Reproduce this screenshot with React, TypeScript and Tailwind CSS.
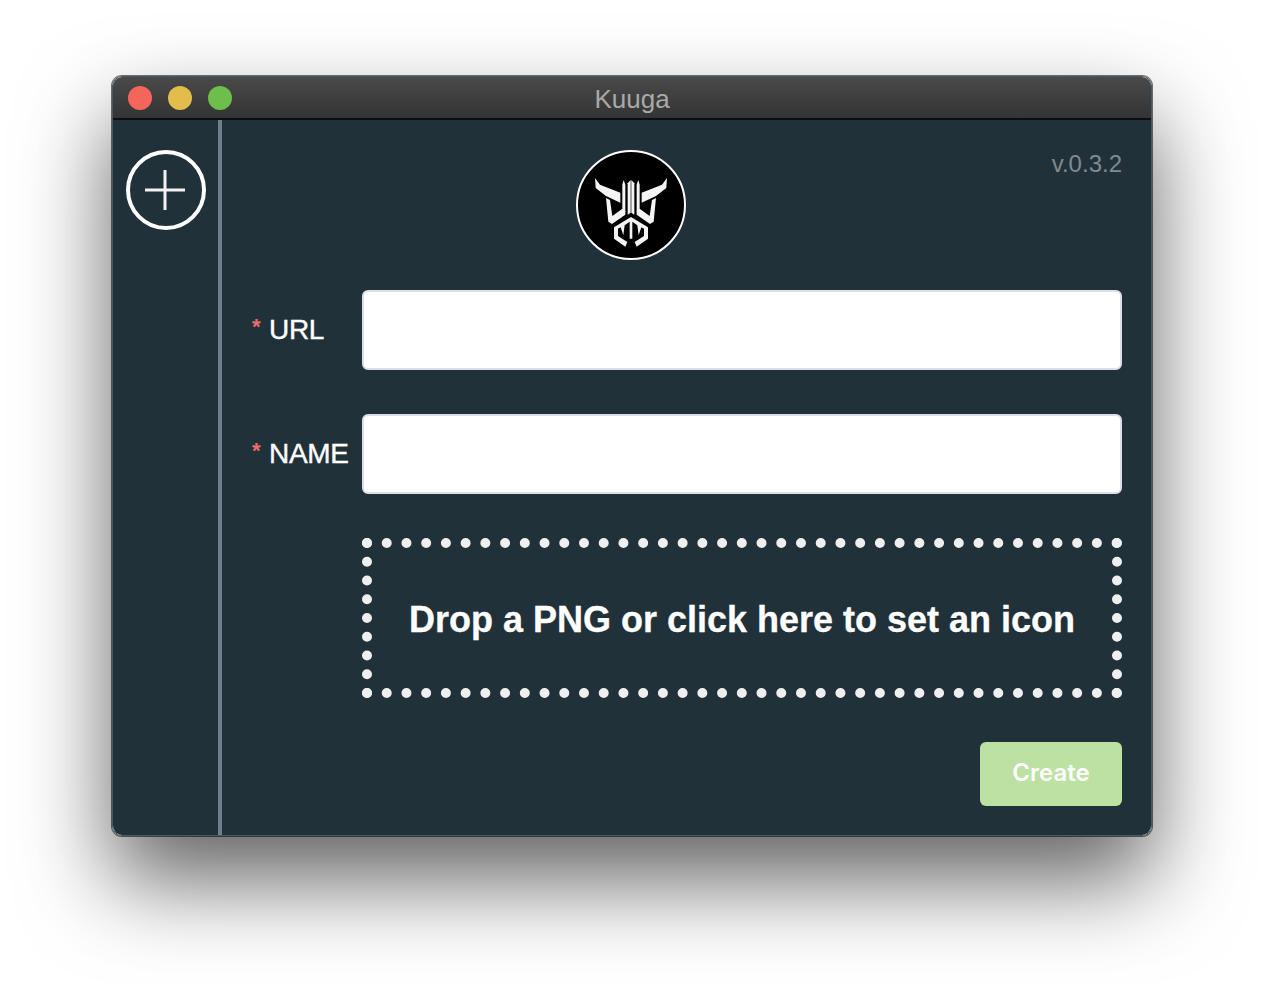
import React from 'react';

const Logo: React.FC = () => (
  <svg width="110" height="110" viewBox="0 0 110 110" className="flex-shrink-0 block">
    <circle cx="55" cy="55" r="54" fill="#000" stroke="#fff" strokeWidth="2" />
    <g transform="translate(14 20) scale(0.3333)" fill="#f4f4f4">
      {/* horns */}
      <polygon points="15,24 30,44 91,68 91,98 48,78 17,54" />
      <polygon points="231,24 216,44 155,68 155,98 198,78 229,54" />
      {/* cheeks, they run into the outer bars */}
      <polygon points="48,84 60,90 67,138 97,116 106,124 106,134 66,162 55,155" />
      <polygon points="198,84 186,90 179,138 149,116 140,124 140,134 180,162 191,155" />
      {/* centre bars */}
      <polygon points="101,30 106,44 106,126 97,126 97,44" />
      <polygon points="145,30 140,44 140,126 149,126 149,44" />
      <polygon points="113,40 122,30 122,128 113,134" />
      <polygon points="133,40 124,30 124,128 133,134" />
      {/* jaw */}
      <polygon points="123,141 174,172 174,206 140,230 134,216 162,198 162,176 154,172 146,196 142,166 127,155 127,206 119,206 119,155 104,166 100,196 92,172 84,176 84,198 112,216 106,230 72,206 72,172" />
    </g>
  </svg>
);

const PlusCircle: React.FC = () => (
  <svg width="80" height="80" viewBox="0 0 80 80" className="block">
    <circle cx="40" cy="40" r="38" fill="none" stroke="#fff" strokeWidth="4" />
    <path d="M19 40h40M39 20v40" stroke="#f2f2f2" strokeWidth="3" fill="none" />
  </svg>
);

const Field: React.FC<{ label: string }> = ({ label }) => (
  <div className="flex items-center">
    <div className="w-[110px] flex-shrink-0 flex items-center text-[28px] leading-none text-white tracking-[-0.3px] [-webkit-text-stroke:0.4px_#fff]">
      <span className="w-[17px] text-[22px] font-bold text-[#ee6d68] -mt-[6px] [-webkit-text-stroke:0]">*</span>
      <span>{label}</span>
    </div>
    <input className="w-[760px] h-20 bg-white rounded-md border-2 border-[#dcdfe6] outline-none" />
  </div>
);

export default function App() {
  return (
    <div className="min-h-[984px] bg-white pt-[76px] px-[112px] font-['Liberation_Sans',Arial,sans-serif] overflow-hidden">
      <div className="w-[1040px] h-[760px] rounded-[10px] flex flex-col overflow-hidden border border-[#4c5860] shadow-[0_0_0_1px_rgba(0,0,0,0.55),0_44px_90px_rgba(0,0,0,0.62)]">
        {/* Title bar */}
        <div className="h-[44px] flex-shrink-0 relative flex items-center justify-center bg-gradient-to-b from-[#4b4a4a] to-[#343434] border-b-2 border-[#0e0e0e] -mx-px -mt-px">
          <div className="absolute left-4 top-[10px] flex gap-4">
            <span className="w-6 h-6 rounded-full bg-[#f4665b]" />
            <span className="w-6 h-6 rounded-full bg-[#e3bd4b]" />
            <span className="w-6 h-6 rounded-full bg-[#6dbe4a]" />
          </div>
          <span className="text-[26px] leading-none text-[#a9a9a9] mt-[4px]">Kuuga</span>
        </div>

        <div className="flex-1 flex bg-[#21313a] min-h-0">
          {/* Sidebar */}
          <aside className="w-[109px] flex-shrink-0 border-r-4 border-[#6d808c] pt-[30px] pl-[13px]">
            <PlusCircle />
          </aside>

          {/* Form */}
          <main className="flex-1 pl-[30px] pt-[30px]">
            <div className="flex w-[870px] items-start">
              <div className="ml-[324px]">
                <Logo />
              </div>
              <span className="ml-auto mt-[2px] text-[24px] leading-[24px] text-[#808a91]">v.0.3.2</span>
            </div>
            <div className="mt-[30px] flex flex-col gap-[44px] w-[870px]">
              <Field label="URL" />
              <Field label="NAME" />
              <div className="ml-[110px] w-[760px] h-[160px] border-[10px] border-dotted border-[#efefef] flex items-center justify-center text-[36px] leading-none font-bold text-white pt-1 [-webkit-text-stroke:0.3px_#fff]">
                Drop a PNG or click here to set an icon
              </div>
              <div className="flex justify-end">
                <button className="w-[142px] h-16 rounded-md bg-[#bde0a3] text-white text-[24px] pb-[3px] font-semibold font-['Inter',sans-serif]">Create</button>
              </div>
            </div>
          </main>
        </div>
      </div>
    </div>
  );
}
